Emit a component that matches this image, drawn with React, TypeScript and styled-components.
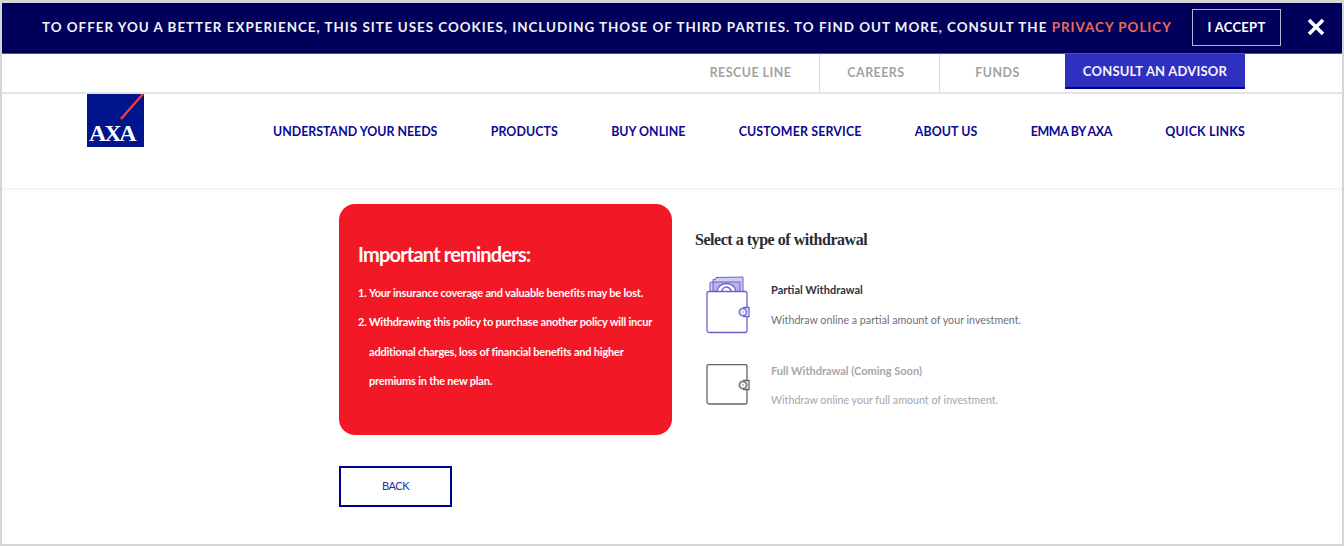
import React from "react";
import styled, { createGlobalStyle } from "styled-components";

const Global = createGlobalStyle`
  html, body { margin: 0; padding: 0; background: #fff; }
  body { font-family: Lato, "Noto Sans", sans-serif; }
  * { box-sizing: border-box; }
`;

const Frame = styled.div`
  width: 1344px;
  height: 546px;
  border-style: solid;
  border-color: #d6d6d6;
  border-width: 3px 2px 2px 2px;
  background: #fff;
  overflow: hidden;
`;

const CookieBar = styled.div`
  height: 51px;
  background: #00005b;
  border-bottom: 1px solid #4a4ac4;
  display: flex;
  align-items: center;
  padding-left: 40px;
`;

const CookieText = styled.p`
  margin: -2px 0 0;
  width: 1150px;
  flex: none;
  color: #f1f1f6;
  font-size: 13.4px;
  font-weight: 700;
  letter-spacing: 1px;
  white-space: nowrap;
`;

const PolicyLink = styled.a`
  color: #ec6a55;
`;

const AcceptButton = styled.button`
  width: 89px;
  height: 37px;
  flex: none;
  margin-top: -1px;
  background: transparent;
  border: 1px solid #b5b5cf;
  color: #fff;
  font: 700 13px Lato, sans-serif;
  letter-spacing: 0.3px;
  padding: 0 0 2px;
`;

const CloseButton = styled.button`
  margin-left: 25px;
  margin-top: -2px;
  width: 20px;
  height: 20px;
  padding: 0;
  border: 0;
  background: transparent;
  display: flex;
`;

const UtilityBar = styled.div`
  height: 40px;
  border-bottom: 2px solid #e4e4e4;
  display: flex;
  padding-left: 668px;
  align-items: stretch;
`;

const UtilityLink = styled.a<{ $w: number; $line?: boolean; $left?: number; $right?: number }>`
  width: ${(p) => p.$w}px;
  padding: 0 ${(p) => p.$right ?? 0}px 2px ${(p) => p.$left ?? 0}px;
  border-right: ${(p) => (p.$line ? "1px solid #d9d9d9" : "0")};
  display: flex;
  align-items: center;
  justify-content: center;
  color: #a2a2a2;
  font-size: 12.4px;
  font-weight: 700;
  letter-spacing: 0.5px;
  white-space: nowrap;
`;

const AdvisorButton = styled.a`
  width: 180px;
  height: 35px;
  margin-left: 5px;
  background: #2f2fc0;
  border-bottom: 2px solid #00008f;
  color: #f4f4fc;
  font-size: 13px;
  font-weight: 700;
  letter-spacing: 0.2px;
  display: flex;
  align-items: center;
  justify-content: center;
  white-space: nowrap;
`;

const MainNav = styled.header`
  height: 96px;
  border-bottom: 2px solid #f4f4f4;
  display: flex;
  align-items: flex-start;
  padding-left: 85px;
`;

const LogoWrap = styled.div`
  width: 57px;
  height: 53px;
  flex: none;
  display: flex;
`;

const NavList = styled.nav`
  margin-left: 129px;
  margin-top: 28px;
  width: 972px;
  display: flex;
  justify-content: space-between;
`;

const NavItem = styled.a<{ $track: number }>`
  color: #0a0a94;
  font-size: 12.4px;
  font-weight: 700;
  line-height: 20px;
  letter-spacing: ${(p) => p.$track}px;
  white-space: nowrap;
`;

const Content = styled.main`
  padding: 14px 0 0 337px;
  display: grid;
  grid-template-columns: 333px 1fr;
  column-gap: 23px;
  align-items: start;
`;

const LeftColumn = styled.div`
  display: flex;
  flex-direction: column;
  align-items: flex-start;
`;

const ReminderCard = styled.section`
  width: 333px;
  height: 231px;
  background: #f31826;
  border-radius: 16px;
  color: #fff;
  padding: 36px 12px 0 19px;
`;

const ReminderTitle = styled.h2`
  margin: 0 0 10px;
  font-size: 20px;
  line-height: 28px;
  font-weight: 700;
  letter-spacing: -0.8px;
`;

const ReminderList = styled.ol`
  margin: 0;
  padding: 0;
  list-style: none;
`;

const ReminderItem = styled.li`
  display: grid;
  grid-template-columns: 11px 1fr;
  font-size: 11px;
  font-weight: 700;
  line-height: 29.4px;
  letter-spacing: -0.2px;
  white-space: nowrap;
`;

const BackButton = styled.button`
  margin-top: 31px;
  width: 113px;
  height: 41px;
  background: #fff;
  border: 2px solid #00008f;
  color: #2a2a9c;
  font: 400 11px Lato, sans-serif;
  letter-spacing: -0.5px;
  padding: 0 0 2px;
`;

const RightColumn = styled.section`
  padding-top: 26px;
`;

const SectionTitle = styled.h1`
  margin: 0 0 26px;
  color: #2b2b33;
  font: 700 16px/20px "Liberation Serif", serif;
  letter-spacing: -0.47px;
`;

const Option = styled.div<{ $muted?: boolean }>`
  display: grid;
  grid-template-columns: 43px 1fr;
  column-gap: 22px;
  margin-left: 11px;
  align-items: start;
  height: ${(p) => (p.$muted ? "60px" : "88px")};
`;

const OptionIcon = styled.svg`
  display: block;
`;

const OptionTitle = styled.div<{ $muted?: boolean }>`
  color: ${(p) => (p.$muted ? "#a6a6ab" : "#33333b")};
  font-size: 11px;
  font-weight: 700;
  line-height: 16px;
  letter-spacing: 0;
  margin-top: ${(p) => (p.$muted ? "-1px" : "6px")};
`;

const OptionText = styled.div<{ $muted?: boolean }>`
  color: ${(p) => (p.$muted ? "#a6a6ab" : "#6f6f76")};
  font-size: 10.7px;
  line-height: 16px;
  letter-spacing: 0;
  margin-top: ${(p) => (p.$muted ? "13px" : "14px")};
`;

const Wallet = ({ color, fill }: { color: string; fill: boolean }) => (
  <OptionIcon width="44" height={fill ? 58 : 44} viewBox={fill ? "0 0 44 58" : "0 15 44 44"} fill="none">
    {fill && (
      <g stroke={color} strokeWidth="1">
        <path d="M4 16V6.5L7 6V3.5L10 3V1.5L37 1V16Z" fill="#cfcbf1" />
        <path d="M7 6H34V16H7Z" fill="#b9b4e8" />
        <path d="M11 16a9 8 0 0 1 19 0" fill="#fff" strokeWidth="1.4" />
        <path d="M16 16a4.5 5 0 0 1 9 0" strokeWidth="1.6" />
      </g>
    )}
    <rect x="1" y="15.5" width="40" height={fill ? 41 : 39.5} rx="2" fill="#fff" stroke={color} strokeWidth="1.3" />
    <path d="M37 31.5h6v9h-6" fill="#fff" stroke={color} strokeWidth="1.3" />
    <circle cx="37" cy="36" r="3.6" fill="#fff" stroke={color} strokeWidth="2" opacity="0.8" />
    <circle cx="37" cy="36" r="1" fill={color} opacity="0.5" />
  </OptionIcon>
);

const Logo = () => (
  <svg width="57" height="53" viewBox="0 0 57 53">
    <rect width="57" height="53" fill="#00148c" />
    <path d="M56 0L34 25" stroke="#ef3d3d" strokeWidth="2.4" />
    <text x="2" y="47" fill="#fff" fontFamily="Liberation Serif" fontWeight="700" fontSize="24" letterSpacing="-2.2">AXA</text>
  </svg>
);

const navItems: [string, number][] = [
  ["UNDERSTAND YOUR NEEDS", 0],
  ["PRODUCTS", 0.1],
  ["BUY ONLINE", 0],
  ["CUSTOMER SERVICE", 0.16],
  ["ABOUT US", 0.08],
  ["EMMA BY AXA", -0.35],
  ["QUICK LINKS", 0.2],
];

export default function App() {
  return (
    <Frame>
      <Global />
      <CookieBar>
        <CookieText>
          TO OFFER YOU A BETTER EXPERIENCE, THIS SITE USES COOKIES, INCLUDING THOSE OF THIRD PARTIES. TO FIND OUT MORE, CONSULT THE <PolicyLink>PRIVACY POLICY</PolicyLink>
        </CookieText>
        <AcceptButton>I ACCEPT</AcceptButton>
        <CloseButton aria-label="Close">
          <svg width="20" height="20" viewBox="0 0 20 20">
            <path d="M3 3L17 17M17 3L3 17" stroke="#fff" strokeWidth="3.6" />
          </svg>
        </CloseButton>
      </CookieBar>
      <UtilityBar>
        <UtilityLink $w={150} $line $left={12}>RESCUE LINE</UtilityLink>
        <UtilityLink $w={120} $line $right={7}>CAREERS</UtilityLink>
        <UtilityLink $w={120} $right={5}>FUNDS</UtilityLink>
        <AdvisorButton>CONSULT AN ADVISOR</AdvisorButton>
      </UtilityBar>
      <MainNav>
        <LogoWrap><Logo /></LogoWrap>
        <NavList>
          {navItems.map(([n, t]) => <NavItem key={n} $track={t}>{n}</NavItem>)}
        </NavList>
      </MainNav>
      <Content>
        <LeftColumn>
          <ReminderCard>
            <ReminderTitle>Important reminders:</ReminderTitle>
            <ReminderList>
              <ReminderItem><span>1.</span><span>Your insurance coverage and valuable benefits may be lost.</span></ReminderItem>
              <ReminderItem><span>2.</span><span>Withdrawing this policy to purchase another policy will incur<br />additional charges, loss of financial benefits and higher<br />premiums in the new plan.</span></ReminderItem>
            </ReminderList>
          </ReminderCard>
          <BackButton>BACK</BackButton>
        </LeftColumn>
        <RightColumn>
          <SectionTitle>Select a type of withdrawal</SectionTitle>
          <Option>
            <Wallet color="#6a62cc" fill />
            <div>
              <OptionTitle>Partial Withdrawal</OptionTitle>
              <OptionText>Withdraw online a partial amount of your investment.</OptionText>
            </div>
          </Option>
          <Option $muted>
            <Wallet color="#666" fill={false} />
            <div>
              <OptionTitle $muted>Full Withdrawal (Coming Soon)</OptionTitle>
              <OptionText $muted>Withdraw online your full amount of investment.</OptionText>
            </div>
          </Option>
        </RightColumn>
      </Content>
    </Frame>
  );
}
